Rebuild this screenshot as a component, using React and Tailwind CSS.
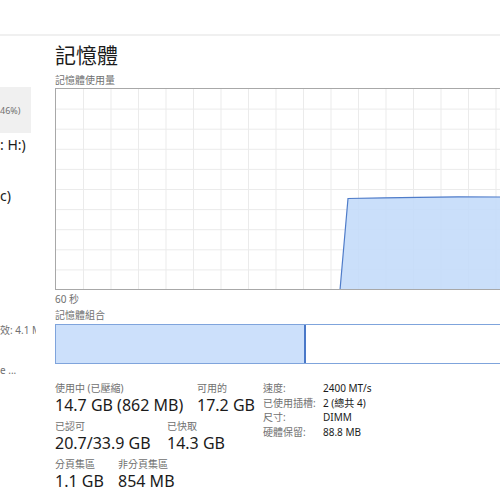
import React from "react";

const gridX = Array.from({ length: 17 }, (_, i) => 27.5 * (i + 1));
const gridY = Array.from({ length: 9 }, (_, i) => 20.1 * (i + 1));

const Stat = ({ label, value, className = "" }) => (
  <div className={`flex flex-col ${className}`}>
    <span className="text-[10px] leading-[14px] text-[#707070]">{label}</span>
    <span className="text-[16px] leading-[20px] text-[#1b1b1b]">{value}</span>
  </div>
);

const specs = [
  ["速度:", "2400 MT/s"],
  ["已使用插槽:", "2 (總共 4)"],
  ["尺寸:", "DIMM"],
  ["硬體保留:", "88.8 MB"],
];

export default function App() {
  return (
    <div
      className="w-[500px] h-[500px] bg-white overflow-hidden flex flex-col"
      style={{ fontFamily: '"Noto Sans", "Noto Sans CJK TC", sans-serif' }}
    >
      {/* top bar */}
      <div className="h-[36px] shrink-0 border-b-2 border-[#f0f0f0]" />

      <div className="flex flex-1 overflow-hidden">
        {/* cropped sidebar */}
        <div className="w-[36px] shrink-0 overflow-hidden whitespace-nowrap">
          <div className="mt-[51px] w-[31px] h-[46px] bg-[#f0f0f0] flex items-end pb-[16px]">
            <span className="text-[9px] leading-[12px] text-[#707070]">46%)</span>
          </div>
          <div className="h-[22px] mt-[1px] text-[14px] leading-[22px] text-[#1b1b1b]">: H:)</div>
          <div className="h-[22px] mt-[29px] text-[14px] leading-[22px] text-[#1b1b1b]">c)</div>
          <div className="mt-[117px] text-[10px] leading-[12px] text-[#707070]">效: 4.1 M</div>
          <div className="mt-[28px] text-[10px] leading-[12px] text-[#707070]">e ...</div>
        </div>

        {/* main */}
        <div className="flex-1 pl-[19px] overflow-hidden">
          <div className="mt-[4px] text-[21px] leading-[30px] text-[#1b1b1b]">記憶體</div>
          <div className="mt-[4px] text-[10px] leading-[12px] text-[#707070]">記憶體使用量</div>

          <div className="mt-[2px] w-[470px] h-[202px] border-l border-t border-b border-[#a8a8a8]">
            <svg width="470" height="200" className="block">
              {gridX.map((x) => (
                <line key={x} x1={x} y1="0" x2={x} y2="200" stroke="#ebebeb" strokeWidth="1" />
              ))}
              {gridY.map((y) => (
                <line key={y} x1="0" y1={y} x2="470" y2={y} stroke="#ebebeb" strokeWidth="1" />
              ))}
              <polygon
                points="284,201 292,109.5 328,108.8 362,108.3 402,107.8 445,108 470,108 470,201"
                fill="#c4dbfa"
                fillOpacity="0.9"
              />
              <polyline
                points="284,201 292,109.5 328,108.8 362,108.3 402,107.8 445,108 470,108"
                fill="none"
                stroke="#4f7cc9"
                strokeWidth="1.2"
              />
            </svg>
          </div>

          <div className="mt-[3px] text-[10px] leading-[12px] text-[#707070]">60 秒</div>
          <div className="mt-[4px] text-[10px] leading-[12px] text-[#707070]">記憶體組合</div>

          <div className="mt-[3px] w-[470px] h-[40px] border border-[#7fa4dc] flex">
            <div className="w-[250px] h-full bg-[#cce0fb] border-r-2 border-[#4a78c8]" />
            <div className="flex-1" />
          </div>

          <div className="mt-[17px] flex">
            <div className="w-[208px] flex flex-col gap-[4px]">
              <div className="flex">
                <Stat className="w-[142px]" label="使用中 (已壓縮)" value="14.7 GB (862 MB)" />
                <Stat label="可用的" value="17.2 GB" />
              </div>
              <div className="flex">
                <Stat className="w-[112px]" label="已認可" value="20.7/33.9 GB" />
                <Stat label="已快取" value="14.3 GB" />
              </div>
              <div className="flex">
                <Stat className="w-[63px]" label="分頁集區" value="1.1 GB" />
                <Stat label="非分頁集區" value="854 MB" />
              </div>
            </div>
            <div className="flex flex-col">
              {specs.map(([k, v]) => (
                <div key={k} className="flex text-[10px] leading-[14.5px]">
                  <span className="w-[60px] text-[#707070]">{k}</span>
                  <span className="text-[#1b1b1b]">{v}</span>
                </div>
              ))}
            </div>
          </div>
        </div>
      </div>
    </div>
  );
}
